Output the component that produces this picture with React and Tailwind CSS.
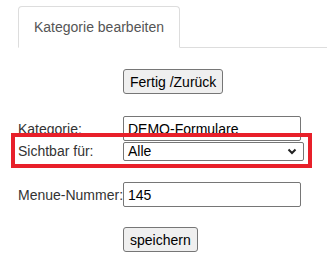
export default function App() {
  return (
    <div className="min-h-screen bg-white text-[14px] leading-[20px] text-[#333]" style={{ fontFamily: '"Liberation Sans", Arial, sans-serif' }}>
      <div className="pt-[6px] pl-[18px]">
        <ul className="flex border-b border-[#ddd]">
          <li className="-mb-px border border-[#ddd] border-b-transparent rounded-t-[4px] bg-white px-[15px] py-[10px] text-[#555]">
            Kategorie bearbeiten
          </li>
        </ul>
      </div>

      <div className="pl-[18px] pt-[21px]">
        <div className="grid grid-cols-[105px_auto]">
          <div />
          <div>
            <button className="h-[25px] rounded-[3px] border border-[#767676] bg-[#efefef] px-[6px] text-[14px] text-black">
              Fertig /Zurück
            </button>
          </div>
        </div>

        <div className="mt-[22px] grid grid-cols-[105px_auto] items-center">
          <span>Kategorie:</span>
          <input
            defaultValue="DEMO-Formulare"
            className="h-[25px] w-[178px] rounded-[2px] border border-[#767676] px-[4px] text-[14px] text-black outline-none"
          />

          <span>Sichtbar für:</span>
          <div className="relative w-[181px]">
            <div className="flex h-[19px] items-center justify-between rounded-[2px] border border-[#767676] bg-white pl-[4px] pr-[6px] text-black">
              <span>Alle</span>
              <svg width="10" height="7" viewBox="0 0 10 7" fill="none">
                <path d="M1.5 1.5 L5 5 L8.5 1.5" stroke="#222" strokeWidth="2" />
              </svg>
            </div>
          </div>
        </div>

        <div className="mt-[21px] grid grid-cols-[105px_auto] items-center">
          <span className="whitespace-nowrap">Menue-Nummer:</span>
          <input
            defaultValue="145"
            className="h-[25px] w-[178px] rounded-[2px] border border-[#767676] px-[4px] text-[14px] text-black outline-none"
          />
        </div>

        <div className="mt-[20px] grid grid-cols-[105px_auto]">
          <div />
          <div>
            <button className="h-[25px] rounded-[3px] border border-[#767676] bg-[#efefef] px-[6px] text-[14px] text-black">
              speichern
            </button>
          </div>
        </div>
      </div>

      <div className="pointer-events-none absolute left-[11px] top-[133px] h-[35px] w-[301px] border-[4px] border-[#e8202a]" />
    </div>
  );
}
